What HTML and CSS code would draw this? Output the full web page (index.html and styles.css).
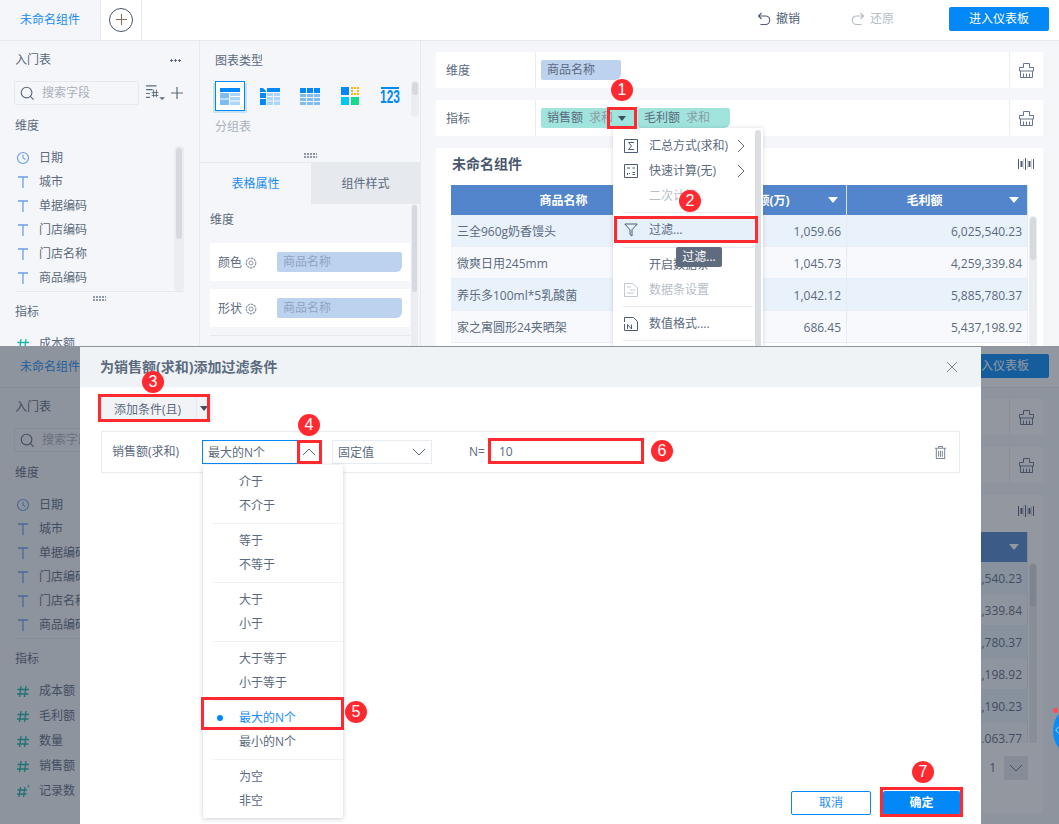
FILE: index.html
```html
<!DOCTYPE html>
<html lang="zh-CN">
<head>
<meta charset="utf-8">
<title>添加过滤条件</title>
<link rel="stylesheet" href="styles.css">
</head>
<body>
<svg class="defs" xmlns="http://www.w3.org/2000/svg">
  <symbol id="i-t" viewBox="0 0 14 14"><path d="M2 2h10M7 2v11" fill="none" stroke="currentColor" stroke-width="1.3"/></symbol>
  <symbol id="i-hash" viewBox="0 0 14 14"><path d="M5 2 3.500 13M10 2 8.500 13M1.500 5.500h11.500M1 10h11.500" fill="none" stroke="currentColor" stroke-width="1.300"/></symbol>
  <symbol id="i-hashstar" viewBox="0 0 14 14"><path d="M4.500 3 3 13M9 3 7.500 13M1.500 6h9.500M1 10h9.500" fill="none" stroke="currentColor" stroke-width="1.300"/><path d="M12.500 1v2.500M11.500 1.500l2 1.500M13.500 1.500l-2 1.500" fill="none" stroke="currentColor" stroke-width=".6"/></symbol>
  <symbol id="i-clock" viewBox="0 0 14 14"><circle cx="7" cy="7" r="5.500" fill="none" stroke="currentColor" stroke-width="1.200"/><path d="M7 3.500V7l2.500 1.500" fill="none" stroke="currentColor" stroke-width="1.100"/></symbol>
  <symbol id="i-search" viewBox="0 0 16 16"><circle cx="7" cy="7" r="5.700" fill="none" stroke="currentColor" stroke-width="1.200"/><path d="m11 11 3.500 3.500" fill="none" stroke="currentColor" stroke-width="1.200"/></symbol>
  <symbol id="i-brush" viewBox="0 0 15 15"><path d="M4.500.5h6v4h4v3.500H.5V4.500h4zM1.500 8v6.500h12V8M4.500 10.500v4M7.500 10.500v4M10.500 10.500v4" fill="none" stroke="currentColor" stroke-width="1"/></symbol>
  <symbol id="i-gear" viewBox="0 0 12 12"><circle cx="6" cy="6" r="4.800" fill="none" stroke="currentColor" stroke-width="1.200" stroke-dasharray="2.500 .6"/><circle cx="6" cy="6" r="2" fill="none" stroke="currentColor"/></symbol>
  <symbol id="i-bars" viewBox="0 0 16 12"><path d="M.5 1v10M7.500 0v12M15.500 1v10" fill="none" stroke="currentColor" stroke-width="1"/><path d="M3.500 3v6M11.500 3v6" fill="none" stroke="currentColor" stroke-width="2"/><path d="M5.500 1v10M9.500 1v10M13.500 1v10" fill="none" stroke="currentColor" stroke-width=".5" opacity=".5"/></symbol>
  <symbol id="i-trash" viewBox="0 0 14 16"><path d="M1 3.500h12M5 3.500V1.500h4v2M2.500 3.500v11h9v-11M5 6v6.500M7 6v6.500M9 6v6.500" fill="none" stroke="currentColor" stroke-width="1.100"/></symbol>
  <symbol id="i-chart1" viewBox="0 0 20 17"><path fill="#0288f7" d="M0 0h20v4H0z"/><path fill="#7dbdf4" d="M0 5h9v5.500H0zM0 11.500h9V17H0z"/><path fill="#a9d6fa" d="M10 5h10v3H10zM10 9h10v3.500H10zM10 13.500h10V17H10z"/></symbol>
  <symbol id="i-chart2" viewBox="0 0 20 17"><path fill="#0288f7" d="M7 0h13v4H7zM0 5h6v5H0zM0 11h6v6H0z"/><path fill="#0288f7" d="M0 0h3l3 3v1H0z"/><path fill="#a9d6fa" d="M7 5h6v3H7zM14 5h6v3h-6zM7 9h6v3.500H7zM14 9h6v3.500h-6zM7 13.500h6V17H7zM14 13.500h6V17h-6z"/></symbol>
  <symbol id="i-chart3" viewBox="0 0 20 17"><path fill="#0288f7" d="M0 0h6v5H0zM7 0h6v5H7zM14 0h6v5h-6z"/><path fill="#7dbdf4" d="M0 6h6v3H0zM7 6h6v3H7zM14 6h6v3h-6zM0 10h6v3H0zM7 10h6v3H7zM14 10h6v3h-6zM0 14h6v3H0zM7 14h6v3H7zM14 14h6v3h-6z"/></symbol>
  <symbol id="i-chart4" viewBox="0 0 18 18"><path fill="#0288f7" d="M0 0h8v8H0z"/><path fill="#00c6f7" d="M0 10h8v8H0z"/><path fill="#18d98a" d="M10 10h8v8h-8z"/><path fill="#ffb300" d="M10 0h2v2h-2zM13 0h2v2h-2zM16 0h2v2h-2zM10 3h2v2h-2zM16 3h2v2h-2zM10 6h2v2h-2zM13 6h2v2h-2zM16 6h2v2h-2z"/></symbol>
  <symbol id="i-sum" viewBox="0 0 14 14"><path d="M.5.500h13v13H.500z" fill="none" stroke="currentColor"/><path d="M10 3.500H4.500L7.500 7l-3 3.500H10" fill="none" stroke="currentColor"/></symbol>
  <symbol id="i-calc" viewBox="0 0 14 14"><path d="M.5.500h13v13H.500z" fill="none" stroke="currentColor"/><path d="M3 4h3M8.500 4h2.500M3 9.500h1M5 9.500h1M3 10.500h1M8.500 8.500H11M8.500 10.500H11" fill="none" stroke="currentColor"/></symbol>
  <symbol id="i-funnel" viewBox="0 0 14 14"><path d="M.8 1h12.400L8 6.800V13L6 11.500V6.800z" fill="none" stroke="currentColor"/></symbol>
  <symbol id="i-databar" viewBox="0 0 14 14"><path d="M.5.500h8.500l4.500 4.500v8.500h-13z" fill="none" stroke="currentColor"/><path d="M3 4h4M6 7h5M3 10h7" fill="none" stroke="currentColor"/></symbol>
  <symbol id="i-num" viewBox="0 0 14 14"><path d="M.5 5V.5h9l4 4v9h-13V7M3.500 12V7.500l4 4.500V7.500" fill="none" stroke="currentColor"/></symbol>
  <symbol id="i-filterlist" viewBox="0 0 20 18"><path d="M0 1h11M0 5h7M0 9h4M0 13h4" fill="none" stroke="currentColor" stroke-width="1.300"/><path d="M8 5v8M11 5v8M6 8h7M6 11h7" fill="none" stroke="currentColor" stroke-width="1"/><path d="M14 13h6l-3 3z" fill="currentColor"/></symbol>
  <symbol id="i-undo" viewBox="0 0 14 14"><path d="M4.500 1 1.500 4l3 3M1.500 4h7a4 4 0 0 1 0 8.500H3.500" fill="none" stroke="currentColor" stroke-width="1.100"/></symbol>
  <symbol id="i-redo" viewBox="0 0 14 14"><path d="M9.500 1l3 3-3 3M12.500 4h-7a4 4 0 0 0 0 8.500h5" fill="none" stroke="currentColor" stroke-width="1.100"/></symbol>
  <symbol id="i-plus" viewBox="0 0 13 13"><path d="M6.500 0v13M0 6.500h13" fill="none" stroke="currentColor" stroke-width="1.300"/></symbol>
  <symbol id="i-right" viewBox="0 0 8 14"><path d="m1 1 6 6-6 6" fill="none" stroke="currentColor"/></symbol>
  <symbol id="i-down" viewBox="0 0 14 8"><path d="m1 1 6 6 6-6" fill="none" stroke="currentColor"/></symbol>
  <symbol id="i-up" viewBox="0 0 14 8"><path d="m1 7 6-6 6 6" fill="none" stroke="currentColor"/></symbol>
  <symbol id="i-close" viewBox="0 0 12 12"><path d="m1 1 10 10M11 1 1 11" fill="none" stroke="currentColor"/></symbol>
</svg>

<div class="shot shot-top">
  <div class="app">
    <header class="topbar">
      <div class="tab-name">未命名组件</div>
      <div class="tab-add"><span class="add-circle"><svg class="ic13"><use href="#i-plus"/></svg></span></div>
      <div class="actions">
        <span class="act"><svg class="ic14"><use href="#i-undo"/></svg>撤销</span>
        <span class="act act-off"><svg class="ic14"><use href="#i-redo"/></svg>还原</span>
        <button class="enter">进入仪表板</button>
      </div>
    </header>
    <div class="work">
      <aside class="fields">
        <div class="fields-head"><span>入门表</span><i class="more"></i></div>
        <div class="search-row">
          <div class="search"><svg class="ic15"><use href="#i-search"/></svg><span>搜索字段</span></div>
          <svg class="ic-filterlist"><use href="#i-filterlist"/></svg>
          <svg class="ic13 ic-add"><use href="#i-plus"/></svg>
        </div>
        <div class="sec-title">维度</div>
        <div class="dim-wrap">
          <ul class="dim-list">
            <li><svg class="fi fi-dim"><use href="#i-clock"/></svg>日期</li>
            <li><svg class="fi fi-dim"><use href="#i-t"/></svg>城市</li>
            <li><svg class="fi fi-dim"><use href="#i-t"/></svg>单据编码</li>
            <li><svg class="fi fi-dim"><use href="#i-t"/></svg>门店编码</li>
            <li><svg class="fi fi-dim"><use href="#i-t"/></svg>门店名称</li>
            <li><svg class="fi fi-dim"><use href="#i-t"/></svg>商品编码</li>
          </ul>
          <div class="vbar vbar-dim"><i></i></div>
        </div>
        <div class="grip grip-h"><i></i></div>
        <div class="sec-title sec-measure">指标</div>
        <ul class="mea-list">
          <li><svg class="fi fi-mea"><use href="#i-hash"/></svg>成本额</li>
        </ul>
      </aside>
      <section class="config">
        <div class="types">
          <div class="sec-title type-title">图表类型</div>
          <div class="type-row">
            <span class="type-cell type-on"><svg class="tc1"><use href="#i-chart1"/></svg></span>
            <span class="type-cell"><svg class="tc1"><use href="#i-chart2"/></svg></span>
            <span class="type-cell"><svg class="tc1"><use href="#i-chart3"/></svg></span>
            <span class="type-cell"><svg class="tc4"><use href="#i-chart4"/></svg></span>
            <span class="type-cell type-num"><i></i><b>123</b></span>
            <div class="vbar vbar-type"><i></i></div>
          </div>
          <div class="type-label">分组表</div>
          <div class="grip grip-type"><i></i></div>
        </div>
        <div class="cfg-tabs"><span class="cfg-on">表格属性</span><span>组件样式</span></div>
        <div class="props">
          <div class="props-main">
            <div class="sec-title prop-title">维度</div>
            <div class="prop-row"><span class="prop-name">颜色</span><svg class="ic12"><use href="#i-gear"/></svg><span class="prop-pill">商品名称</span></div>
            <div class="prop-row"><span class="prop-name">形状</span><svg class="ic12"><use href="#i-gear"/></svg><span class="prop-pill">商品名称</span></div>
            <div class="prop-sep"></div>
          </div>
          <div class="vbar vbar-prop"><i></i></div>
        </div>
      </section>
      <main class="canvas">
        <div class="shelf"><span class="shelf-name">维度</span><div class="shelf-body"><span class="pill pill-dim">商品名称</span></div><span class="shelf-tool"><svg class="ic-brush"><use href="#i-brush"/></svg></span></div>
        <div class="shelf"><span class="shelf-name">指标</span><div class="shelf-body"><span class="pill pill-mea pill-w1">销售额<em>求和</em><u class="tri"></u></span><span class="pill pill-mea pill-w2">毛利额<em>求和</em></span></div><span class="shelf-tool"><svg class="ic-brush"><use href="#i-brush"/></svg></span></div>
        <article class="card">
          <div class="card-head"><strong>未命名组件</strong><svg class="ic-bars"><use href="#i-bars"/></svg></div>
          <div class="card-body">
            <div class="grid-wrap">
              <div class="trow thead"><span class="c1">商品名称<u class="tri-w"></u></span><span class="c2">销售额(万)<u class="tri-w"></u></span><span class="c3">毛利额<u class="tri-w"></u></span></div>
              <div class="trow"><span class="c1">三全960g奶香馒头</span><span class="c2">1,059.66</span><span class="c3">6,025,540.23</span></div>
              <div class="trow"><span class="c1">微爽日用245mm</span><span class="c2">1,045.73</span><span class="c3">4,259,339.84</span></div>
              <div class="trow"><span class="c1">养乐多100ml*5乳酸菌</span><span class="c2">1,042.12</span><span class="c3">5,885,780.37</span></div>
              <div class="trow"><span class="c1">家之寓圆形24夹晒架</span><span class="c2">686.45</span><span class="c3">5,437,198.92</span></div>
            </div>
            <div class="vbar vbar-table"><i></i></div>
          </div>
        </article>
      </main>
    </div>
  </div>

  <div class="ctx-menu">
    <div class="ctx-scroll"><i></i></div>
    <div class="ctx-item"><svg class="ctx-ic"><use href="#i-sum"/></svg>汇总方式(求和)<svg class="ctx-arrow"><use href="#i-right"/></svg></div>
    <div class="ctx-item"><svg class="ctx-ic"><use href="#i-calc"/></svg>快速计算(无)<svg class="ctx-arrow"><use href="#i-right"/></svg></div>
    <div class="ctx-item ctx-off ctx-noicon">二次计算</div>
    <div class="ctx-sep"></div>
    <div class="ctx-item ctx-hover"><svg class="ctx-ic"><use href="#i-funnel"/></svg>过滤...</div>
    <div class="ctx-sep"></div>
    <div class="ctx-item ctx-noicon">开启数据条</div>
    <div class="ctx-item ctx-off"><svg class="ctx-ic"><use href="#i-databar"/></svg>数据条设置</div>
    <div class="ctx-sep"></div>
    <div class="ctx-item"><svg class="ctx-ic"><use href="#i-num"/></svg>数值格式....</div>
    <div class="ctx-sep"></div>
  </div>
  <div class="tooltip">过滤...</div>
  <div class="mark mark-1"></div>
  <div class="mark mark-2"></div>
  <span class="badge badge-1">1</span>
  <span class="badge badge-2">2</span>
</div>

<div class="shot shot-bottom">
  <div class="app app-low">
    <header class="topbar">
      <div class="tab-name">未命名组件</div>
      <div class="tab-add"><span class="add-circle"><svg class="ic13"><use href="#i-plus"/></svg></span></div>
      <div class="actions">
        <span class="act"><svg class="ic14"><use href="#i-undo"/></svg>撤销</span>
        <span class="act act-off"><svg class="ic14"><use href="#i-redo"/></svg>还原</span>
        <button class="enter">进入仪表板</button>
      </div>
    </header>
    <div class="work">
      <aside class="fields">
        <div class="fields-head"><span>入门表</span><i class="more"></i></div>
        <div class="search-row">
          <div class="search"><svg class="ic15"><use href="#i-search"/></svg><span>搜索字段</span></div>
          <svg class="ic-filterlist"><use href="#i-filterlist"/></svg>
          <svg class="ic13 ic-add"><use href="#i-plus"/></svg>
        </div>
        <div class="sec-title">维度</div>
        <div class="dim-wrap">
          <ul class="dim-list">
            <li><svg class="fi fi-dim"><use href="#i-clock"/></svg>日期</li>
            <li><svg class="fi fi-dim"><use href="#i-t"/></svg>城市</li>
            <li><svg class="fi fi-dim"><use href="#i-t"/></svg>单据编码</li>
            <li><svg class="fi fi-dim"><use href="#i-t"/></svg>门店编码</li>
            <li><svg class="fi fi-dim"><use href="#i-t"/></svg>门店名称</li>
            <li><svg class="fi fi-dim"><use href="#i-t"/></svg>商品编码</li>
          </ul>
          <div class="vbar vbar-dim"><i></i></div>
        </div>
        <div class="grip grip-h"><i></i></div>
        <div class="sec-title sec-measure">指标</div>
        <ul class="mea-list">
          <li><svg class="fi fi-mea"><use href="#i-hash"/></svg>成本额</li>
          <li><svg class="fi fi-mea"><use href="#i-hash"/></svg>毛利额</li>
          <li><svg class="fi fi-mea"><use href="#i-hash"/></svg>数量</li>
          <li><svg class="fi fi-mea"><use href="#i-hash"/></svg>销售额</li>
          <li><svg class="fi fi-mea"><use href="#i-hashstar"/></svg>记录数</li>
        </ul>
      </aside>
      <section class="config"></section>
      <main class="canvas">
        <div class="shelf"><span class="shelf-name">维度</span><div class="shelf-body"></div><span class="shelf-tool"><svg class="ic-brush"><use href="#i-brush"/></svg></span></div>
        <div class="shelf"><span class="shelf-name">指标</span><div class="shelf-body"></div><span class="shelf-tool"><svg class="ic-brush"><use href="#i-brush"/></svg></span></div>
        <article class="card card-full">
          <div class="card-head"><strong>未命名组件</strong><svg class="ic-bars"><use href="#i-bars"/></svg></div>
          <div class="card-body card-body-full">
            <div class="grid-wrap">
              <div class="trow thead"><span class="c1">商品名称<u class="tri-w"></u></span><span class="c2">销售额(万)<u class="tri-w"></u></span><span class="c3">毛利额<u class="tri-w"></u></span></div>
              <div class="trow"><span class="c1"></span><span class="c2"></span><span class="c3">6,025,540.23</span></div>
              <div class="trow"><span class="c1"></span><span class="c2"></span><span class="c3">4,259,339.84</span></div>
              <div class="trow"><span class="c1"></span><span class="c2"></span><span class="c3">5,885,780.37</span></div>
              <div class="trow"><span class="c1"></span><span class="c2"></span><span class="c3">5,437,198.92</span></div>
              <div class="trow"><span class="c1"></span><span class="c2"></span><span class="c3">5,102,190.23</span></div>
              <div class="trow"><span class="c1"></span><span class="c2"></span><span class="c3">4,871,063.77</span></div>
            </div>
            <div class="vbar vbar-table vbar-table-full"><i></i></div>
          </div>
          <div class="pager"><span>1</span><span class="pager-box"><svg class="ic-down"><use href="#i-down"/></svg></span></div>
        </article>
      </main>
    </div>
  </div>
  <div class="scrim"></div>
  <div class="float-tab"><svg class="float-ic" viewBox="0 0 6 10"><path d="M4.500 1 1 5l3.500 4" fill="none" stroke="#cfe8ff"/></svg></div>
  <i class="float-dot"></i>

  <div class="dialog">
    <div class="dlg-title"><span>为销售额(求和)添加过滤条件</span><svg class="ic-close"><use href="#i-close"/></svg></div>
    <div class="dlg-body">
      <div class="add-btn"><span class="add-text">添加条件(且)</span><span class="add-caret"><u class="tri"></u></span></div>
      <div class="cond">
        <span class="cond-name">销售额(求和)</span>
        <span class="sel sel-on">最大的N个<svg class="ic-down"><use href="#i-up"/></svg></span>
        <span class="sel sel-fixed">固定值<svg class="ic-down"><use href="#i-down"/></svg></span>
        <span class="cond-n">N=</span>
        <span class="cond-input">10</span>
        <svg class="ic-trash"><use href="#i-trash"/></svg>
      </div>
    </div>
    <div class="dlg-foot"><button class="btn-cancel">取消</button><button class="btn-ok">确定</button></div>
    <div class="drop">
      <div class="drop-item">介于</div>
      <div class="drop-item">不介于</div>
      <div class="drop-sep"></div>
      <div class="drop-item">等于</div>
      <div class="drop-item">不等于</div>
      <div class="drop-sep"></div>
      <div class="drop-item">大于</div>
      <div class="drop-item">小于</div>
      <div class="drop-sep"></div>
      <div class="drop-item">大于等于</div>
      <div class="drop-item">小于等于</div>
      <div class="drop-sep"></div>
      <div class="drop-item drop-on"><i class="drop-dot"></i>最大的N个</div>
      <div class="drop-item">最小的N个</div>
      <div class="drop-sep"></div>
      <div class="drop-item">为空</div>
      <div class="drop-item">非空</div>
    </div>
  </div>
  <div class="mark mark-3"></div>
  <div class="mark mark-4"></div>
  <div class="mark mark-5"></div>
  <div class="mark mark-6"></div>
  <div class="mark mark-7"></div>
  <span class="badge badge-3">3</span>
  <span class="badge badge-4">4</span>
  <span class="badge badge-5">5</span>
  <span class="badge badge-6">6</span>
  <span class="badge badge-7">7</span>
</div>
</body>
</html>
```
FILE: styles.css
```css
* { box-sizing: border-box; }
html, body { margin: 0; padding: 0; }
body {
  width: 1059px; height: 824px; overflow: hidden; background: #f5f6f9;
  font: 12px/20px "Open Sans", "Noto Sans CJK SC", sans-serif; color: #5b6a7e;
}
ul { list-style: none; margin: 0; padding: 0; }
u, em, i { text-decoration: none; font-style: normal; }
button { font: inherit; margin: 0; padding: 0; cursor: pointer; }
svg { flex: none; display: block; }
.defs { display: none; }

.shot { position: relative; overflow: hidden; width: 1059px; }
.shot-top { height: 346px; }
.shot-bottom { height: 478px; background: #f5f6f9; }
.app { width: 1059px; height: 477px; background: #f5f6f9; }
.app-low { margin-top: 1px; }

/* top bar */
.topbar { display: flex; height: 41px; background: #fff; border-bottom: 1px solid #e6e9ed; }
.tab-name { width: 101px; padding-left: 20px; line-height: 39px; color: #1a8cf5; background: #f5f6f9; border-right: 1px solid #e6e9ed; }
.tab-add { width: 41px; display: flex; align-items: center; justify-content: center; border-right: 1px solid #e6e9ed; padding-bottom: 1px; }
.add-circle { width: 24px; height: 24px; border: 1px solid #46546a; border-radius: 50%; display: flex; align-items: center; justify-content: center; color: #8a6f60; }
.ic13 { width: 11px; height: 11px; }
.ic14 { width: 14px; height: 14px; margin-right: 5px; }
.actions { flex: 1; display: flex; align-items: center; padding: 0 10px 2px 0; justify-content: flex-end; }
.act { display: flex; align-items: center; color: #4e5d72; margin-right: 51px; }
.act-off { color: #b6bdc7; margin-right: 55px; }
.enter { width: 100px; height: 24px; border: 0; border-radius: 2px; background: #0288f7; color: #fff; }

.work { display: flex; height: 436px; }

/* fields column */
.fields { width: 200px; border-right: 1px solid #e6e9ed; padding: 9px 15px 0; }
.fields-head { display: flex; justify-content: space-between; align-items: center; height: 20px; line-height: 22px; padding-right: 3px; }
.more { width: 11px; height: 3px; background-image: radial-gradient(circle at 1.500px 1.500px, #5b6a7e 1.100px, transparent 1.300px); background-size: 4px 3px; }
.search-row { display: flex; align-items: center; margin: 11px 0 10px -1px; height: 24px; }
.search { width: 125px; height: 24px; display: flex; align-items: center; gap: 7px; padding-left: 5px; border: 1px solid #e6e9ed; border-radius: 2px; color: #a9b1bc; }
.ic15 { width: 15px; height: 15px; color: #5b6a7e; }
.ic-filterlist { width: 19px; height: 17px; margin-left: 7px; color: #5b6a7e; }
.ic-add { width: 12px; height: 12px; margin-left: 6px; color: #5b6a7e; }
.sec-title { height: 20px; line-height: 22px; }
.dim-wrap { display: flex; height: 147px; margin-top: 10px; border-bottom: 1px solid #e6e9ed; }
.dim-list { flex: 1; }
.dim-list li, .mea-list li { display: flex; align-items: center; height: 24px; padding-top: 2px; }
.mea-list li { height: 25px; padding-top: 0; }
.fi { width: 14px; height: 14px; margin: 0 9px 0 1px; }
.fi-dim { color: #6aa0e6; }
.fi-mea { color: #1db3a6; }
.vbar { background: #ebedf1; border-radius: 4px; padding: 1px; }
.vbar i { display: block; background: #d6d9df; border-radius: 3px; }
.vbar-dim { width: 10px; height: 145px; margin-top: 1px; padding: 2px; }
.vbar-dim i { height: 91px; }
.grip { height: 12px; display: flex; align-items: center; justify-content: center; }
.grip i { width: 13px; height: 5px; background-image: radial-gradient(circle at 1px 1px, #8e97a5 .8px, transparent .9px); background-size: 3px 3px; }
.sec-measure { margin-top: -3px; }
.mea-list { margin-top: 10px; }

/* config column */
.config { width: 221px; border-right: 1px solid #e6e9ed; }
.types { height: 122px; padding: 9px 0 0 15px; border-bottom: 1px solid #e6e9ed; }
.type-row { display: flex; gap: 10px; margin-top: 11px; height: 30px; }
.type-cell { width: 30px; height: 30px; display: flex; align-items: center; justify-content: center; }
.type-on { background: #fff; border: 1px solid #0288f7; box-shadow: -2px 2px 0 #cae3f8, 2px 2px 0 #cae3f8; }
.tc1 { width: 20px; height: 17px; }
.tc4 { width: 18px; height: 18px; }
.type-num { flex-direction: column; justify-content: flex-start; padding-top: 6px; }
.type-num i { width: 18px; height: 2px; background: #0288f7; }
.type-num b { display: block; font: 700 18px/17px "Liberation Sans", sans-serif; color: #0288f7; transform: scaleX(.66); }
.vbar-type { width: 8px; height: 36px; margin-left: -4px; padding: 1px; }
.vbar-type i { height: 13px; }
.type-label { margin-top: 6px; color: #a9b1bc; }
.grip-type { margin: 14px 0 0 -15px; height: 8px; }
.cfg-tabs { display: flex; height: 41px; }
.cfg-tabs span { flex: 1; text-align: center; line-height: 42px; background: #e6e9ed; }
.cfg-tabs span.cfg-on { flex: none; width: 111px; background: transparent; color: #1a8cf5; }
.props { display: flex; padding-left: 10px; }
.props-main { width: 200px; }
.prop-title { margin: 5px 0 14px; }
.prop-row { display: flex; align-items: center; height: 38px; margin-bottom: 8px; padding-left: 8px; padding-top: 2px; background: #fff; }
.prop-name { width: 27px; }
.ic12 { width: 12px; height: 12px; color: #8e97a5; }
.prop-pill { width: 125px; height: 20px; margin-top: -2px; margin-left: 20px; padding-left: 6px; background: #bdd2ee; border-radius: 2px 2px 6px 2px; color: #8ea4c2; }
.prop-sep { height: 1px; margin-top: 8px; background: #e6e9ed; }
.vbar-prop { width: 7px; height: 180px; margin-left: 1px; padding: 1px; }
.vbar-prop i { height: 87px; }

/* main canvas */
.canvas { flex: 1; padding: 11px 16px 0 15px; }
.shelf { display: flex; height: 36px; margin-bottom: 12px; background: #fff; }
.shelf-name { width: 100px; padding-left: 10px; line-height: 38px; border-right: 1px solid #ecedf1; }
.shelf-body { flex: 1; display: flex; gap: 3px; padding: 8px 0 0 5px; }
.shelf-tool { width: 34px; border-left: 1px solid #ecedf1; display: flex; align-items: center; justify-content: center; color: #64748b; }
.ic-brush { width: 15px; height: 15px; }
.pill { height: 20px; padding-left: 6px; border-radius: 2px 2px 6px 2px; }
.pill em { margin-left: 6px; color: #8b9aa6; }
.pill-dim { width: 80px; background: #bdd2ee; }
.pill-mea { background: #a0e4dd; }
.pill-w1 { width: 94px; position: relative; }
.pill-w2 { width: 92px; }
.tri { position: absolute; left: 77px; top: 8px; width: 0; height: 0; border: 4px solid transparent; border-top: 5px solid #3f4d60; border-bottom: 0; }
.card { height: 220px; padding: 0 6px 0 15px; background: #fff; }
.card-full { height: 318px; position: relative; }
.card-head { display: flex; align-items: center; justify-content: space-between; height: 37px; padding: 0 0 6px 1px; }
.card-head strong { font-size: 14px; color: #4a586c; font-weight: 700; }
.ic-bars { width: 16px; height: 12px; margin-right: 3px; color: #4e5d72; }
.card-body { display: flex; height: 200px; }
.card-body-full { height: 211px; overflow: hidden; }
.grid-wrap { width: 577px; }
.trow { display: grid; grid-template-columns: 251px 145px 181px; height: 32px; line-height: 34px; background: #f7f9fd; border-bottom: 1px solid #e9eef6; }
.trow:nth-child(even) { background: #e9f1fb; }
.trow span { padding: 0 5px 0 6px; text-align: right; border-right: 1px solid #e6ecf5; }
.trow .c1 { text-align: left; }
.thead { height: 30px; line-height: 31px; background: #5285cc !important; color: #fff; font-weight: 700; border-bottom: 0; }
.thead span, .thead .c1 { position: relative; text-align: center; padding: 0 25px 0 0; border-right: 1px solid #d7e2f2; }
.tri-w { position: absolute; right: 8px; top: 12px; width: 0; height: 0; border: 5px solid transparent; border-top: 6px solid #fff; border-bottom: 0; }
.vbar-table { width: 8px; height: 130px; margin: 31px 0 0 1px; padding: 1px; }
.vbar-table-full { height: 181px; }
.vbar-table i { height: 43px; }
.pager { display: flex; align-items: center; justify-content: flex-end; gap: 8px; margin: 0 9px 0 0; padding-top: 13px; }
.pager-box { width: 24px; height: 24px; background: #e6e9ed; display: flex; align-items: center; justify-content: center; color: #5b6a7e; }
.ic-down { width: 14px; height: 8px; }

/* top-shot context menu */
.ctx-menu { position: absolute; left: 613px; top: 128px; width: 150px; height: 230px; padding-top: 5px; background: #fff; box-shadow: 0 0 4px rgba(90,100,120,.25); }
.ctx-scroll { position: absolute; right: 2px; top: 2px; width: 6px; height: 230px; background: #dcdee3; border-radius: 3px; }
.ctx-item { display: flex; align-items: center; height: 25px; padding-left: 9px; width: 142px; margin-left: 2px; }
.ctx-ic { width: 14px; height: 14px; margin-right: 11px; color: #4e5d72; }
.ctx-noicon { padding-left: 34px; }
.ctx-arrow { width: 8px; height: 14px; margin-left: auto; margin-right: 12px; color: #5b6a7e; }
.ctx-off { color: #b6bdc7; }
.ctx-off .ctx-ic { color: #c3c9d1; }
.ctx-hover { height: 26px; background: #e6f0fb; }
.ctx-sep { height: 1px; width: 130px; margin: 4px 0 4px 10px; background: #e6e9ed; }
.tooltip { position: absolute; left: 676px; top: 247px; width: 46px; height: 20px; text-align: center; background: #5f6b7e; color: #fff; border-radius: 2px; }

/* annotations */
.mark { position: absolute; border: 3px solid #ff2a30; }
.mark-1 { left: 607px; top: 107px; width: 30px; height: 22px; }
.mark-2 { left: 614px; top: 216px; width: 144px; height: 27px; }
.mark-3 { left: 98px; top: 48px; width: 112px; height: 28px; }
.mark-4 { left: 297px; top: 94px; width: 25px; height: 24px; }
.mark-5 { left: 201px; top: 351px; width: 143px; height: 33px; }
.mark-6 { left: 488px; top: 92px; width: 156px; height: 26px; }
.mark-7 { left: 880px; top: 441px; width: 83px; height: 30px; }
.badge { position: absolute; width: 22px; height: 22px; border-radius: 50%; background: #ff2a30; color: #fff; font: 16px/22px "Liberation Sans", sans-serif; text-align: center; }
.badge-1 { left: 611px; top: 79px; }
.badge-2 { left: 679px; top: 190px; }
.badge-3 { left: 142px; top: 25px; }
.badge-4 { left: 298px; top: 68px; }
.badge-5 { left: 345px; top: 355px; }
.badge-6 { left: 651px; top: 94px; }
.badge-7 { left: 912px; top: 415px; }

/* bottom shot overlay */
.scrim { position: absolute; inset: 0; background: rgba(40,50,66,.5); }
.float-tab { position: absolute; left: 1053px; top: 361px; width: 40px; height: 48px; background: #0c8bf5; border-radius: 50%; padding: 18px 0 0 2px; }
.float-ic { width: 5px; height: 10px; }
.float-dot { position: absolute; left: 1053px; top: 362px; width: 5px; height: 5px; border-radius: 50%; background: #ff4d4f; }
.dialog { position: absolute; left: 80px; top: 1px; width: 901px; height: 477px; background: #fff; display: flex; flex-direction: column; }
.dlg-title { display: flex; align-items: center; justify-content: space-between; height: 40px; padding: 0 23px 0 20px; background: #eff3f6; font-size: 14px; font-weight: 700; color: #5b6a7e; }
.ic-close { width: 12px; height: 12px; color: #7f8a99; }
.dlg-body { flex: 1; padding: 9px 21px 0; }
.add-btn { display: flex; width: 112px; height: 25px; background: #f1f3f6; line-height: 27px; }
.add-text { width: 96px; padding-left: 13px; border-right: 1px solid #e6e9ed; }
.add-caret { position: relative; flex: 1; }
.add-caret .tri { left: 3px; top: 10px; }
.cond { display: flex; align-items: center; height: 42px; margin-top: 10px; padding-left: 10px; border: 1px solid #e8ebef; }
.cond-name { width: 90px; }
.sel { display: flex; align-items: center; justify-content: space-between; height: 24px; padding: 1px 5px 0; border: 1px solid #e8ebef; }
.sel .ic-down { margin-top: -1px; }
.sel-on { width: 120px; margin-right: 10px; border-color: #0288f7; }
.sel-fixed { width: 100px; }
.cond-n { margin: 0 7px 0 37px; }
.cond-input { width: 150px; padding-left: 7px; }
.ic-trash { width: 13px; height: 15px; margin-left: auto; margin-right: 12px; color: #7f8a99; }
.dlg-foot { display: flex; justify-content: flex-end; gap: 12px; height: 33px; padding-right: 21px; }
.dlg-foot button { width: 80px; height: 24px; border-radius: 2px; }
.btn-cancel { background: #fff; border: 1px solid #0288f7; color: #1a8cf5; }
.dlg-foot .btn-ok { width: 77px; border: 0; background: #0288f7; color: #fff; font-weight: 700; }
.drop { position: absolute; left: 123px; top: 118px; width: 140px; height: 353px; padding-top: 4px; background: #fff; border-radius: 2px; box-shadow: 0 1px 5px rgba(90,100,120,.3); }
.drop-item { display: flex; align-items: center; height: 24px; padding: 2px 0 0 36px; }
.drop-sep { height: 1px; margin: 6px 0 4px 10px; background: #eff1f4; }
.drop-on { color: #1a8cf5; padding-left: 14px; }
.drop-dot { width: 6px; height: 6px; margin-right: 16px; border-radius: 50%; background: #0288f7; }
```
